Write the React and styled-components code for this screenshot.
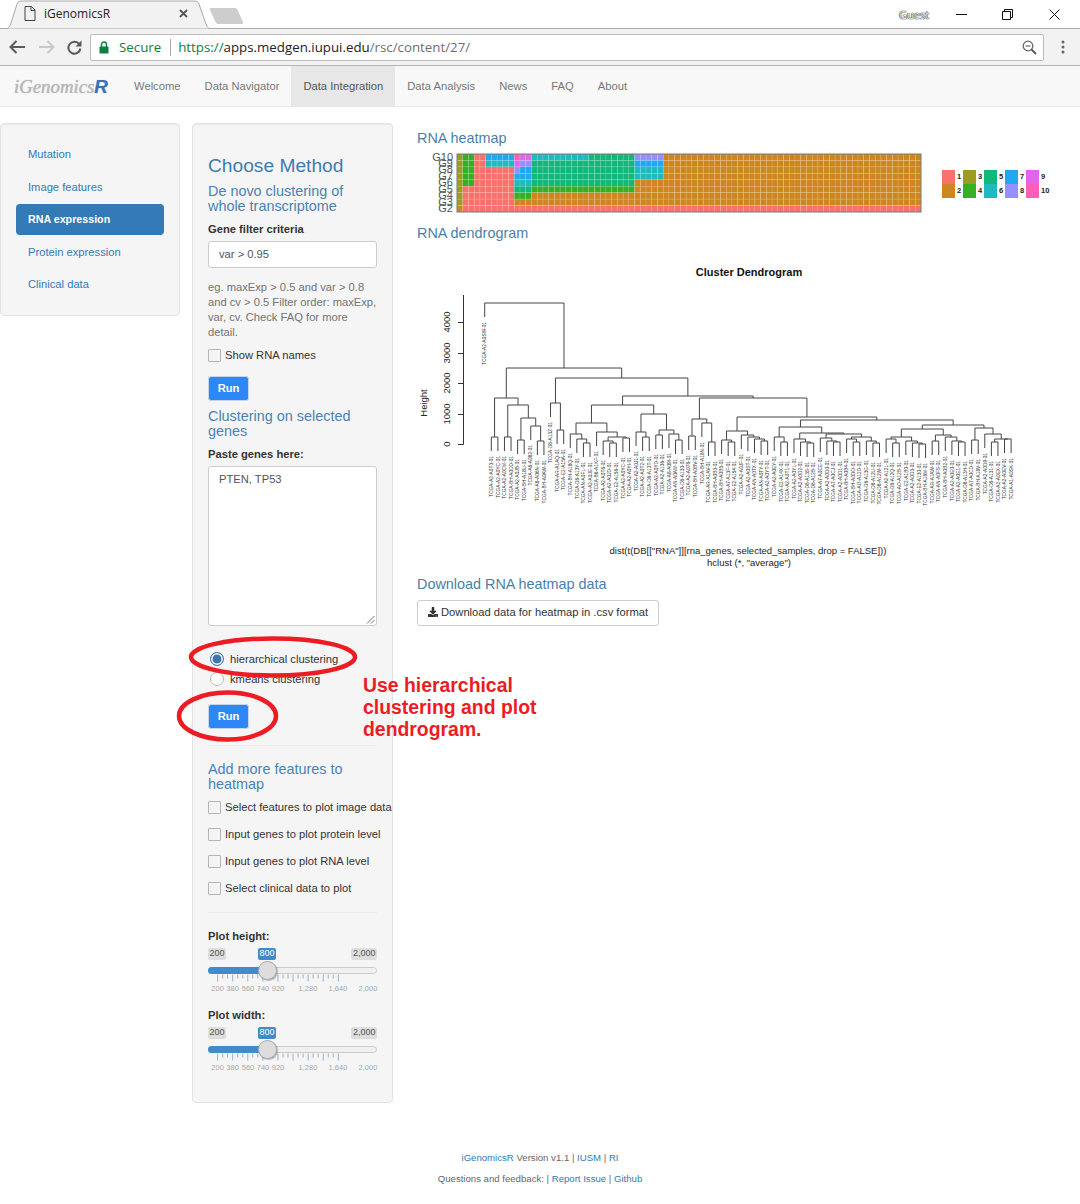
import React from 'react';
import styled, { createGlobalStyle } from 'styled-components';
import { FaDownload } from 'react-icons/fa';

const GlobalStyle = createGlobalStyle`
  * { box-sizing: border-box; }
  html, body { margin: 0; padding: 0; background: #fff; }
  body { font-family: "Liberation Sans", Arial, sans-serif; font-size: 11.2px; color: #333; }
`;

const Page = styled.div`
  position: relative;
  width: 1080px;
  height: 1204px;
  overflow: hidden;
`;

/* browser frame */
const TabStrip = styled.div`
  position: relative;
  display: flex;
  align-items: flex-start;
  height: 29px;
  background: #fff;
  border-bottom: 1px solid #a9a9a9;
`;

const Tab = styled.div`
  position: relative;
  display: flex;
  align-items: center;
  width: 204px;
  height: 29px;
  margin-left: 6px;
  padding: 0 0 2px 18px;
  font-family: "Open Sans", sans-serif;
  font-size: 12px;
  color: #222;
`;

const TabShape = styled.svg`
  position: absolute;
  left: 0;
  top: 0;
`;

const TabTitle = styled.span`
  position: relative;
  margin-left: 8px;
  width: 135px;
`;

const TabIcon = styled.svg`
  position: relative;
  flex: none;
`;

const NewTab = styled.svg`
  margin: 7px 0 0 -1px;
`;

const WindowControls = styled.div`
  display: flex;
  align-items: center;
  margin-left: auto;
  height: 28px;
`;

const GuestName = styled.span`
  width: 57px;
  font-family: "Open Sans", sans-serif;
  font-size: 11px;
  color: #eee;
  text-shadow: 0 0 1px #333, 0 0 1px #333, 0 0 1px #333;
`;

const WindowButton = styled.svg`
  display: block;
  margin-right: ${(p) => p.$gap}px;
`;

const Toolbar = styled.div`
  display: flex;
  align-items: center;
  height: 37px;
  padding-left: 9px;
  background: #f2f2f2;
  border-bottom: 1px solid #b5b5b5;
`;

const ToolIcon = styled.svg`
  flex: none;
  margin-right: ${(p) => p.$gap}px;
`;

const MenuDots = styled.svg`
  flex: none;
  margin-left: 17px;
`;

const Omnibox = styled.div`
  display: flex;
  align-items: center;
  width: 954px;
  height: 27px;
  padding: 0 6px 0 8px;
  background: #fff;
  border: 1px solid #bdbdbd;
  border-radius: 2px;
  font-family: "Open Sans", sans-serif;
  font-size: 13.3px;
`;

const SecureLabel = styled.span`
  margin-left: 10px;
  color: #0b8043;
`;

const OmniDivider = styled.span`
  width: 1px;
  height: 17px;
  margin: 0 7px 0 9px;
  background: #a8a8a8;
`;

const UrlPart = styled.span`
  color: ${(p) => p.$color};
`;

const OmniEnd = styled.svg`
  margin-left: auto;
`;

/* app navbar */
const Navbar = styled.nav`
  display: flex;
  height: 41px;
  background: #f8f8f8;
  border-bottom: 1px solid #e7e7e7;
`;

const Brand = styled.div`
  width: 122px;
  padding: 10px 0 0 14px;
  font-family: "Liberation Serif", serif;
  font-style: italic;
  font-size: 18.8px;
  line-height: 22px;
  color: #b9b9b9;
  text-shadow: 0 0 1px #aaa;
`;

const BrandR = styled.span`
  font-family: "Liberation Sans", sans-serif;
  font-weight: 700;
  color: #3a70bd;
`;

const NavLink = styled.a`
  display: block;
  padding: 0 12px;
  font-size: 11.23px;
  line-height: 40px;
  color: ${(p) => (p.$active ? '#555' : '#777')};
  background: ${(p) => (p.$active ? '#e7e7e7' : 'transparent')};
`;

/* page body */
const Body = styled.div`
  display: flex;
  align-items: flex-start;
  padding-top: 16px;
`;

const Well = styled.div`
  background: #f5f5f5;
  border: 1px solid #e3e3e3;
  border-radius: 4px;
  box-shadow: inset 0 1px 1px rgba(0, 0, 0, 0.05);
`;

const SideNav = styled(Well)`
  display: flex;
  flex-direction: column;
  gap: 1.5px;
  width: 180px;
  padding: 15px 15px 15px;
`;

const Pill = styled.a`
  display: block;
  height: 31px;
  padding: 0 12px;
  line-height: 30px;
  border-radius: 4px;
  color: ${(p) => (p.$active ? '#fff' : '#337ab7')};
  background: ${(p) => (p.$active ? '#337ab7' : 'transparent')};
  font-weight: ${(p) => (p.$active ? 700 : 400)};
  font-size: ${(p) => (p.$active ? 10.7 : 11.2)}px;
`;

const Panel = styled(Well)`
  width: 201px;
  margin-left: 12px;
  padding: 31px 15px 28px;
`;

const Heading = styled.h2`
  margin: 0;
  font-size: 19.2px;
  font-weight: 400;
  line-height: 22px;
  color: #3f7cb0;
`;

const SubHeading = styled.h4`
  margin: ${(p) => p.$top}px 0 0;
  font-size: 14.4px;
  font-weight: 400;
  line-height: 15px;
  color: #4a82b5;
`;

const Label = styled.div`
  margin-top: ${(p) => p.$top}px;
  font-weight: 700;
  line-height: 16px;
  color: #333;
`;

const TextInput = styled.div`
  height: 27px;
  margin-top: 4px;
  padding: 0 10px;
  line-height: 25px;
  background: #fff;
  border: 1px solid #ccc;
  border-radius: 3px;
  color: #555;
`;

const HelpText = styled.p`
  margin: 12px 0 0;
  line-height: 15px;
  color: #737373;
`;

const CheckRow = styled.div`
  display: flex;
  align-items: center;
  gap: 4px;
  height: 16px;
  margin-top: ${(p) => p.$top}px;
  white-space: nowrap;
  color: #333;
`;

const CheckBox = styled.span`
  flex: none;
  width: 13px;
  height: 13px;
  background: #f4f4f4;
  border: 1px solid #b5b5b5;
  border-radius: 1px;
`;

const RadioRow = styled.div`
  display: flex;
  align-items: center;
  gap: 6px;
  height: 16px;
  margin: ${(p) => p.$top}px 0 0 2px;
  color: #333;
`;

const Radio = styled.span`
  flex: none;
  width: 14px;
  height: 14px;
  border-radius: 50%;
  border: 1px solid ${(p) => (p.$checked ? '#4d7fb3' : '#bbb')};
  background: ${(p) => (p.$checked ? '#3b76b0' : '#fff')};
  box-shadow: ${(p) => (p.$checked ? 'inset 0 0 0 1.5px #fff' : 'none')};
`;

const RunButton = styled.button`
  display: block;
  width: 41px;
  height: 25px;
  margin-top: ${(p) => p.$top}px;
  padding: 0 0 2px;
  font: 700 11.2px "Liberation Sans", sans-serif;
  color: #fff;
  background: #2e87f7;
  border: 1px solid #c5d6ea;
  border-radius: 3px;
`;

const GeneArea = styled.div`
  position: relative;
  height: 160px;
  margin-top: 4px;
  padding: 5px 10px;
  line-height: 15px;
  background: #fff;
  border: 1px solid #ccc;
  border-radius: 3px;
  color: #555;
`;

const Resizer = styled.svg`
  position: absolute;
  right: 1px;
  bottom: 1px;
`;

const Rule = styled.hr`
  height: 1px;
  margin: ${(p) => p.$top}px 0 0;
  border: 0;
  background: #ebebeb;
`;

/* sliders */
const SliderBox = styled.div`
  position: relative;
  height: 47px;
  margin-top: 4px;
`;

const BadgeRow = styled.div`
  display: flex;
  justify-content: space-between;
`;

const Badge = styled.span`
  padding: 0 1.5px;
  height: 12px;
  font-size: 9px;
  line-height: 11px;
  border-radius: 2px;
  color: ${(p) => (p.$value ? '#fff' : '#555')};
  background: ${(p) => (p.$value ? '#428bca' : '#ddd')};
`;

const ValueBadge = styled(Badge)`
  position: absolute;
  left: 50px;
  top: 0;
`;

const Track = styled.div`
  position: relative;
  height: 7px;
  margin-top: 7px;
  background: #f0f0f0;
  border: 1px solid #ccc;
  border-radius: 4px;
`;

const TrackFill = styled.div`
  position: absolute;
  left: -1px;
  top: -1px;
  height: 7px;
  background: #428bca;
  border-radius: 4px 0 0 4px;
`;

const Handle = styled.div`
  position: absolute;
  left: 49px;
  top: -7px;
  width: 19px;
  height: 19px;
  background: #ddd;
  border: 1px solid #aaa;
  border-radius: 50%;
  box-shadow: 1px 1px 1px rgba(0, 0, 0, 0.25);
`;

const TickSvg = styled.svg`
  display: block;
  overflow: visible;
  font-size: 7.5px;
`;

/* main column */
const Main = styled.main`
  margin: 5px 0 0 24px;
  width: 640px;
`;

const SectionTitle = styled.h3`
  margin: ${(p) => p.$top}px 0 0;
  font-size: 14.4px;
  font-weight: 400;
  line-height: 20px;
  color: #4a7fa9;
`;

const Chart = styled.svg`
  display: block;
  font-family: "Liberation Sans", Arial, sans-serif;
`;

const DownloadButton = styled.a`
  display: inline-flex;
  align-items: center;
  gap: 3px;
  height: 26px;
  margin-top: 6px;
  padding: 0 10px 2px;
  color: #333;
  background: #fff;
  border: 1px solid #ccc;
  border-radius: 3px;
`;

const Footer = styled.footer`
  margin-top: 47px;
  text-align: center;
  font-size: 9.6px;
  line-height: 16px;
  color: #666;
`;

const FooterLine = styled.div`
  margin-bottom: 5px;
`;

const FooterLink = styled.a`
  color: #337ab7;
`;

/* things drawn over the page */
const Markup = styled.svg`
  position: absolute;
  left: 0;
  top: 0;
  pointer-events: none;
`;

const Callout = styled.div`
  position: absolute;
  left: 363px;
  top: 674px;
  width: 200px;
  font-size: 19.4px;
  font-weight: 700;
  line-height: 22px;
  color: #ed1c24;
`;

/* heatmap data */
const HEAT = ['#f8716b', '#cd8721', '#9c9c22', '#33b023', '#12b87a', '#1ebac0', '#20a9f0', '#9590ff', '#e265ea', '#ff5fb8'];
const COLS = 81;
const HEAT_ROWS = [
  [[1, 3], [3, 4], [5, 1], [10, 7], [11, 10], [13, 9], [23, 6], [31, 5], [36, 8], [COLS, 2]],
  [[1, 3], [3, 4], [5, 1], [10, 6], [11, 9], [13, 8], [31, 5], [36, 7], [COLS, 2]],
  [[1, 3], [3, 4], [10, 1], [11, 8], [13, 7], [31, 5], [36, 6], [COLS, 2]],
  [[1, 3], [3, 4], [10, 1], [13, 7], [31, 5], [36, 6], [COLS, 2]],
  [[1, 3], [3, 4], [10, 1], [13, 6], [31, 5], [COLS, 2]],
  [[1, 3], [10, 1], [13, 5], [31, 4], [COLS, 2]],
  [[1, 3], [10, 1], [13, 4], [COLS, 2]],
  [[1, 3], [10, 1], [COLS, 2]],
  [[1, 2], [COLS, 1]],
];
const GENE_NAMES = ['G10', 'G9', 'G8', 'G7', 'G6', 'G5', 'G4', 'G3', 'G2'];

const Heatmap = () => {
  const cw = 464 / COLS;
  const rh = 58 / 9;
  const cells = [];
  HEAT_ROWS.forEach((runs, r) => {
    let c = 0;
    runs.forEach(([end, color]) => {
      for (; c < end; c++) {
        cells.push(
          <rect key={r + '-' + c} x={457 + c * cw} y={154 + r * rh} width={cw} height={rh}
            fill={HEAT[color - 1]} stroke="rgba(255,255,255,0.22)" strokeWidth="0.5" />
        );
      }
    });
  });
  return (
    <Chart width="640" height="68" viewBox="417 148 640 68">
      {cells}
      <rect x="457" y="154" width="464" height="58" fill="none" stroke="#777" strokeWidth="1" />
      {GENE_NAMES.map((g, i) => (
        <text key={g} x="453" y={160.5 + i * rh} textAnchor="end" fontSize="11" fill="#555">{g}</text>
      ))}
      {[0, 1, 2, 3, 4, 5, 6, 7, 8, 9].map((i) => {
        const col = Math.floor(i / 2);
        const row = i % 2;
        return (
          <g key={i}>
            <rect x={942 + col * 21} y={170 + row * 14} width="13" height="14" fill={HEAT[i]} />
            <text x={957 + col * 21} y={179 + row * 14} fontSize="7.5" fontWeight="700" fill="#222">{i + 1}</text>
          </g>
        );
      })}
    </Chart>
  );
};

/* dendrogram: [height on page, left, right], 0 is a leaf */
const leafPair = (y) => [y, 0, 0];
const TREE = [303, 0, [368,
  [398, leafPair(437), [405, leafPair(437), [418, leafPair(440), [426, 0, leafPair(441)]]]],
  [378,
    [403, 0, leafPair(430)],
    [396,
      [405,
        [423,
          [434, 0, [439, 0, leafPair(443)]],
          [432, 0, [437, [441, 0, leafPair(443)], leafPair(438)]]],
        [414,
          [432, 0, leafPair(437)],
          [430, leafPair(435), [434, 0, leafPair(440)]]]],
      [398,
        [419, leafPair(436), [423, 0, leafPair(442)]],
        [417,
          [431, [440, 0, leafPair(442)], [435, 0, [437, 0, [439, 0, leafPair(441)]]]],
          [420,
            [427,
              [437, 0, leafPair(442)],
              [433,
                [439, 0, [442, 0, leafPair(443)]],
                [434,
                  [438, 0, [441, 0, leafPair(442)]],
                  [437, [439, 0, leafPair(442)], [441, 0, leafPair(443)]]]]],
            [425,
              [429,
                [437, [439, 0, leafPair(443)], [441, 0, [443, 0, leafPair(444)]]],
                [435, leafPair(441), [437, 0, [441, 0, leafPair(442)]]]],
              [428,
                leafPair(440),
                [434, 0, [439, leafPair(442), leafPair(439)]]]]]]]]]]];

const LEAF_NAMES = ('A2-A0SW A2-A0T3 A2-A0YC A2-A0CM BH-A0DD A2-A0JB BH-A18U A8-A082 A8-A06N BH-A0AW D8-A13Z AR-A1AQ E2-A15A BH-A18Q ' +
  'D8-A13Y AN-A0FL A2-A0JE B6-A1KF A2-A0T6 A2-A0JD E2-A158 A2-A0YC A2-A0YI A2-A0J1 A2-A0T2 D8-A13T A2-A0YD A2-A136 A8-A09I AN-A0AM D8-A130 ' +
  'A2-A078 BH-A0BV BH-A18N AR-A1AV BH-A0B3 BH-A0B5 A7-A13F E2-A154 A2-A0JF A2-A0ST AN-A0TX AN-A0TY A2-A0YT A2-A0EY E2-A14X ' +
  'A2-A0T1 A2-A0YL A2-A0D2 D8-A13S D8-A12B A7-A0CE A2-A0D0 A7-A0CJ A2-A0D1 BH-A0B4 BH-A0DO AO-A12D D8-A13G D8-A12U D8-A12W ' +
  'A2-A12L D8-A12Q AO-A12B E2-A1B0 A2-A0D3 E2-A130 BH-A18M AR-A1AW AN-A0FS BH-A0B2 A2-A0E0 A2-A0E1 D8-A13H A7-A0CD BH-A18V ' +
  'A2-A0D9 D8-A131 A2-A0EX A2-A0EV A1-A0SK').split(' ').map((s) => 'TCGA-' + s + '-01');

const Dendrogram = () => {
  const lines = [];
  const labels = [];
  let index = -1;
  const HANG = 14;
  const place = (node, parentY) => {
    if (node === 0) {
      const x = 491.3 + index * 6.58;
      const end = parentY + HANG;
      lines.push(`M${x} ${parentY}V${end}`);
      labels.push(
        <text key={index} transform={`translate(${x + 1.7} ${end + 5}) rotate(-90)`} textAnchor="end" fontSize="4.8" fill="#333">
          {LEAF_NAMES[index + 1]}
        </text>
      );
      index++;
      return x;
    }
    const [y, a, b] = node;
    const xa = place(a, y);
    const xb = place(b, y);
    lines.push(`M${xa} ${y}H${xb}`);
    const x = (xa + xb) / 2;
    if (parentY !== null) lines.push(`M${x} ${parentY}V${y}`);
    return x;
  };
  place(TREE, null);
  const ticks = [[444, '0'], [414, '1000'], [383, '2000'], [353, '3000'], [322, '4000']];
  return (
    <Chart width="640" height="331" viewBox="417 243 640 331">
      <text x="749" y="276" textAnchor="middle" fontSize="11" fontWeight="700" fill="#111">Cluster Dendrogram</text>
      <path d={lines.join('')} fill="none" stroke="#444" strokeWidth="1" />
      {labels}
      <path d="M463.5 295V444.5H458" fill="none" stroke="#333" strokeWidth="1" />
      {ticks.map(([y, t]) => (
        <g key={t}>
          <path d={`M458 ${y + 0.5}H463`} stroke="#333" strokeWidth="1" />
          <text transform={`translate(450 ${y}) rotate(-90)`} textAnchor="middle" fontSize="9.5" fill="#222">{t}</text>
        </g>
      ))}
      <text transform="translate(427 403) rotate(-90)" textAnchor="middle" fontSize="9.5" fill="#222">Height</text>
      <text x="748" y="554" textAnchor="middle" fontSize="9.5" fill="#222">dist(t(DB[["RNA"]][rna_genes, selected_samples, drop = FALSE]))</text>
      <text x="749" y="566" textAnchor="middle" fontSize="9.5" fill="#222">hclust (*, "average")</text>
    </Chart>
  );
};

const SLIDER_LABELS = [['200', 9.6], ['380', 24.7], ['560', 40], ['740', 55], ['920', 70], ['1,280', 100], ['1,640', 130], ['2,000', 160]];

const Ticks = () => {
  const marks = [];
  for (let i = 0; i <= 24; i++) {
    const major = i % 3 === 0;
    const x = 9.6 + i * 5.03;
    marks.push(<path key={i} d={`M${x} 0.5v${major ? 7 : 4}`} stroke={major ? '#8fb3d6' : '#aaa'} strokeWidth="1" />);
  }
  return (
    <TickSvg width="169" height="19">
      {marks}
      {SLIDER_LABELS.map(([t, x]) => (
        <text key={t} x={x} y="17" textAnchor="middle" fill="#a9a9a9">{t}</text>
      ))}
    </TickSvg>
  );
};

const RangeSlider = () => (
  <SliderBox>
    <BadgeRow>
      <Badge>200</Badge>
      <Badge>2,000</Badge>
    </BadgeRow>
    <ValueBadge $value>800</ValueBadge>
    <Track>
      <TrackFill style={{ width: '59px' }} />
      <Handle />
    </Track>
    <Ticks />
  </SliderBox>
);

const FEATURES = ['Select features to plot image data', 'Input genes to plot protein level', 'Input genes to plot RNA level', 'Select clinical data to plot'];
const NAV = ['Welcome', 'Data Navigator', 'Data Integration', 'Data Analysis', 'News', 'FAQ', 'About'];
const SIDE = ['Mutation', 'Image features', 'RNA expression', 'Protein expression', 'Clinical data'];

const App = () => (
  <Page>
    <GlobalStyle />
    <TabStrip>
      <Tab>
        <TabShape width="204" height="29" viewBox="0 0 204 29">
          <path d="M0 29C3 28 4 26 5 23L11 4C12 2 13 1 16 1H188C191 1 192 2 193 4L200 24C201 27 202 28 204 29Z" fill="#f2f2f2" stroke="#a9a9a9" strokeWidth="1" />
        </TabShape>
        <TabIcon width="12" height="15" viewBox="0 0 12 15">
          <path d="M1 .5H7.5L11 4V14.5H1ZM7 .5V4.5H11" fill="none" stroke="#444" strokeWidth="1" />
        </TabIcon>
        <TabTitle>iGenomicsR</TabTitle>
        <TabIcon width="9" height="9" viewBox="0 0 9 9">
          <path d="M1 1L8 8M8 1L1 8" stroke="#555" strokeWidth="1.8" />
        </TabIcon>
      </Tab>
      <NewTab width="36" height="18" viewBox="0 0 36 18">
        <path d="M2 1H26C27 1 28 1.5 28.5 3L34 15C34.5 16 34 17 33 17H9C8 17 7 16.5 6.5 15L1 3C.5 2 1 1 2 1Z" fill="#cdcdcd" />
      </NewTab>
      <WindowControls>
        <GuestName>Guest</GuestName>
        <WindowButton $gap={35} width="11" height="11" viewBox="0 0 11 11"><path d="M0 5.5H11" stroke="#111" strokeWidth="1" /></WindowButton>
        <WindowButton $gap={36} width="11" height="11" viewBox="0 0 11 11"><path d="M.5 2.5H8.5V10.5H.5ZM2.5 2.5V.5H10.5V8.5H8.5" fill="none" stroke="#111" strokeWidth="1" /></WindowButton>
        <WindowButton $gap={20} width="11" height="11" viewBox="0 0 11 11"><path d="M.5 .5L10.5 10.5M10.5 .5L.5 10.5" stroke="#111" strokeWidth="1" /></WindowButton>
      </WindowControls>
    </TabStrip>
    <Toolbar>
      <ToolIcon $gap={12} width="17" height="14" viewBox="0 0 17 14"><path d="M16 7H2M7.5 1L1.5 7L7.5 13" fill="none" stroke="#5a5a5a" strokeWidth="2" /></ToolIcon>
      <ToolIcon $gap={12} width="17" height="14" viewBox="0 0 17 14"><path d="M1 7H15M9.5 1L15.5 7L9.5 13" fill="none" stroke="#c9c9c9" strokeWidth="2" /></ToolIcon>
      <ToolIcon $gap={8} width="15" height="15" viewBox="0 0 15 15"><path d="M12.3 4.2A6 6 0 1 0 13.4 8.5" fill="none" stroke="#5a5a5a" strokeWidth="2" /><path d="M14.5 .5V6.5H8.5Z" fill="#5a5a5a" /></ToolIcon>
      <Omnibox>
        <svg width="10" height="13" viewBox="0 0 10 13">
          <path d="M2.5 6V3.5A2.5 2.5 0 0 1 7.5 3.5V6" fill="none" stroke="#0b8043" strokeWidth="1.4" />
          <rect x="0.5" y="5.5" width="9" height="7" rx="0.8" fill="#0b8043" />
        </svg>
        <SecureLabel>Secure</SecureLabel>
        <OmniDivider />
        <UrlPart $color="#0b8043">https://</UrlPart>
        <UrlPart $color="#222">apps.medgen.iupui.edu</UrlPart>
        <UrlPart $color="#6f6f6f">/rsc/content/27/</UrlPart>
        <OmniEnd width="15" height="15" viewBox="0 0 15 15">
          <circle cx="6" cy="6" r="4.8" fill="none" stroke="#666" strokeWidth="1.3" />
          <path d="M3.5 6H8.5" stroke="#666" strokeWidth="1.2" />
          <path d="M9.5 9.5L14 14" stroke="#555" strokeWidth="1.8" />
        </OmniEnd>
      </Omnibox>
      <MenuDots width="4" height="14" viewBox="0 0 4 14">
        <circle cx="2" cy="2" r="1.5" fill="#666" /><circle cx="2" cy="7" r="1.5" fill="#666" /><circle cx="2" cy="12" r="1.5" fill="#666" />
      </MenuDots>
    </Toolbar>
    <Navbar>
      <Brand>iGenomics<BrandR>R</BrandR></Brand>
      {NAV.map((n) => (
        <NavLink key={n} $active={n === 'Data Integration'}>{n}</NavLink>
      ))}
    </Navbar>
    <Body>
      <SideNav>
        {SIDE.map((s) => (
          <Pill key={s} $active={s === 'RNA expression'}>{s}</Pill>
        ))}
      </SideNav>
      <Panel>
        <Heading>Choose Method</Heading>
        <SubHeading $top={7}>De novo clustering of whole transcriptome</SubHeading>
        <Label $top={7}>Gene filter criteria</Label>
        <TextInput>var &gt; 0.95</TextInput>
        <HelpText>eg. maxExp &gt; 0.5 and var &gt; 0.8 and cv &gt; 0.5 Filter order: maxExp, var, cv. Check FAQ for more detail.</HelpText>
        <CheckRow $top={7}><CheckBox />Show RNA names</CheckRow>
        <RunButton $top={13}>Run</RunButton>
        <SubHeading $top={8}>Clustering on selected genes</SubHeading>
        <Label $top={7}>Paste genes here:</Label>
        <GeneArea>
          PTEN, TP53
          <Resizer width="9" height="9" viewBox="0 0 9 9"><path d="M8.5 1L1 8.5M8.5 5L5 8.5" stroke="#777" strokeWidth="1" /></Resizer>
        </GeneArea>
        <RadioRow $top={25}><Radio $checked />hierarchical clustering</RadioRow>
        <RadioRow $top={4}><Radio />kmeans clustering</RadioRow>
        <RunButton $top={17}>Run</RunButton>
        <Rule $top={16} />
        <SubHeading $top={16}>Add more features to heatmap</SubHeading>
        {FEATURES.map((f, i) => (
          <CheckRow key={f} $top={i === 0 ? 7 : 11}><CheckBox />{f}</CheckRow>
        ))}
        <Rule $top={16} />
        <Label $top={15}>Plot height:</Label>
        <RangeSlider />
        <Label $top={12}>Plot width:</Label>
        <RangeSlider />
      </Panel>
      <Main>
        <SectionTitle $top={0}>RNA heatmap</SectionTitle>
        <Heatmap />
        <SectionTitle $top={7}>RNA dendrogram</SectionTitle>
        <Dendrogram />
        <SectionTitle $top={0}>Download RNA heatmap data</SectionTitle>
        <DownloadButton><FaDownload size={10} /> Download data for heatmap in .csv format</DownloadButton>
      </Main>
    </Body>
    <Footer>
      <FooterLine><FooterLink>iGenomicsR</FooterLink> Version v1.1 | <FooterLink>IUSM</FooterLink> | <FooterLink>RI</FooterLink></FooterLine>
      <FooterLine>Questions and feedback: | <FooterLink>Report Issue</FooterLink> | <FooterLink>Github</FooterLink></FooterLine>
    </Footer>
    <Markup width="1080" height="1204" viewBox="0 0 1080 1204">
      <ellipse cx="273" cy="657" rx="82" ry="18.5" fill="none" stroke="#ed1c24" strokeWidth="4.5" />
      <ellipse cx="227.5" cy="716" rx="48.5" ry="23.5" fill="none" stroke="#ed1c24" strokeWidth="4.5" />
    </Markup>
    <Callout>Use hierarchical clustering and plot dendrogram.</Callout>
  </Page>
);

export default App;
